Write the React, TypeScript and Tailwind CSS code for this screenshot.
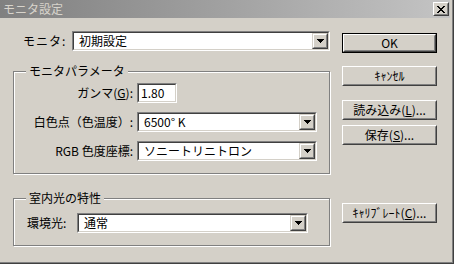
import React from "react";

function Sunken({ className = "", children }: { className?: string; children?: React.ReactNode }) {
  return (
    <div className={`border border-t-[#808080] border-l-[#808080] border-r-white border-b-white ${className}`}>
      <div className="h-full border border-t-[#404040] border-l-[#404040] border-r-[#d4d0c8] border-b-[#d4d0c8] bg-white flex items-center">
        {children}
      </div>
    </div>
  );
}

function DropBtn() {
  return (
    <div className="w-[16px] h-full border border-t-[#d4d0c8] border-l-[#d4d0c8] border-r-[#404040] border-b-[#404040]">
      <div className="w-full h-full border border-t-white border-l-white border-r-[#808080] border-b-[#808080] bg-[#d4d0c8] flex items-center justify-center">
        <svg width="7" height="4" viewBox="0 0 7 4" shapeRendering="crispEdges">
          <path d="M0 0h7v1H0zM1 1h5v1H1zM2 2h3v1H2zM3 3h1v1H3z" fill="#000" />
        </svg>
      </div>
    </div>
  );
}

function Combo({ className = "", text }: { className?: string; text: string }) {
  return (
    <Sunken className={className}>
      <span className="flex-1 pl-[5px] whitespace-nowrap">{text}</span>
      <DropBtn />
    </Sunken>
  );
}

function Btn({ children, def = false }: { children: React.ReactNode; def?: boolean }) {
  const inner = (
    <div className="h-full border border-t-white border-l-white border-r-[#404040] border-b-[#404040]">
      <div className="h-full border border-t-[#d4d0c8] border-l-[#d4d0c8] border-r-[#808080] border-b-[#808080] flex items-center justify-center whitespace-nowrap">
        {children}
      </div>
    </div>
  );
  return def ? <div className="h-[20px] border border-black">{inner}</div> : <div className="h-[20px]">{inner}</div>;
}

function Group({ title, className = "", children }: { title: string; className?: string; children: React.ReactNode }) {
  return (
    <div className={`relative border border-[#808080] shadow-[inset_1px_1px_0_#ffffff,1px_1px_0_#ffffff] ${className}`}>
      <span className="absolute top-[-8px] left-[12px] px-[3px] bg-[#d4d0c8] leading-[14px]">{title}</span>
      {children}
    </div>
  );
}

export default function App() {
  return (
    <div className="w-[454px] h-[264px] bg-[#d4d0c8] overflow-hidden font-['Noto_Sans_CJK_JP','Noto_Sans',sans-serif] text-[12px] leading-[14px] text-black">
      <div className="h-full border-r border-b border-r-[#404040] border-b-[#404040]">
        <div className="h-full flex flex-col border-r border-b border-r-[#808080] border-b-[#808080]">
          {/* Title bar */}
          <div className="h-[18px] mr-[2px] bg-linear-to-r from-[#808080] to-[#c4c4c4] flex items-center justify-between">
            <span className="pl-[3px] text-[#d8d4cc]">モニタ設定</span>
            <div className="w-[16px] h-[14px] mr-[1px] border border-t-white border-l-white border-r-[#404040] border-b-[#404040]">
              <div className="w-full h-full border border-t-[#d4d0c8] border-l-[#d4d0c8] border-r-[#808080] border-b-[#808080] bg-[#d4d0c8] flex items-center justify-center">
                <svg width="8" height="7" viewBox="0 0 8 7" shapeRendering="crispEdges">
                  <path
                    d="M0 0h2v1H0zM6 0h2v1H6zM1 1h2v1H1zM5 1h2v1H5zM2 2h4v1H2zM3 3h2v1H3zM2 4h4v1H2zM1 5h2v1H1zM5 5h2v1H5zM0 6h2v1H0zM6 6h2v1H6z"
                    fill="#000"
                  />
                </svg>
              </div>
            </div>
          </div>

          {/* Body */}
          <div className="flex flex-1">
            {/* Left column */}
            <div className="ml-[13px] w-[317px] flex flex-col">
              <div className="mt-[13px] h-[20px] flex items-center">
                <span className="w-[59px] pl-[10px] tracking-[1px]">モニタ:</span>
                <Combo className="flex-1 h-full" text="初期設定" />
              </div>

              <Group title="モニタパラメータ" className="mt-[20px] h-[103px] pt-[11px] flex flex-col gap-[9px]">
                <div className="h-[20px] flex items-center">
                  <span className="w-[119px] text-right">
                    ガンマ(<span className="underline">G</span>):
                  </span>
                  <Sunken className="ml-[4px] w-[40px] h-full">
                    <span className="pl-[2px]">1.80</span>
                  </Sunken>
                </div>
                <div className="h-[20px] flex items-center">
                  <span className="w-[119px] text-right whitespace-nowrap">白色点（色温度）:</span>
                  <Combo className="ml-[4px] w-[180px] h-full" text="6500° K" />
                </div>
                <div className="h-[20px] flex items-center">
                  <span className="w-[119px] text-right whitespace-nowrap">RGB 色度座標:</span>
                  <Combo className="ml-[4px] w-[180px] h-full" text="ソニートリニトロン" />
                </div>
              </Group>

              <Group title="室内光の特性" className="mt-[24px] h-[48px] pt-[14px]">
                <div className="h-[20px] flex items-center">
                  <span className="w-[63px] pl-[13px]">環境光:</span>
                  <Combo className="w-[231px] h-full" text="通常" />
                </div>
              </Group>
            </div>

            {/* Right column */}
            <div className="ml-[12px] w-[95px] flex flex-col">
              <div className="mt-[15px]">
                <Btn def>OK</Btn>
              </div>
              <div className="mt-[13px]">
                <Btn>ｷｬﾝｾﾙ</Btn>
              </div>
              <div className="mt-[14px]">
                <Btn>
                  読み込み(<span className="underline">L</span>)...
                </Btn>
              </div>
              <div className="mt-[5px]">
                <Btn>
                  保存(<span className="underline">S</span>)...
                </Btn>
              </div>
              <div className="mt-[58px]">
                <Btn>
                  ｷｬﾘﾌﾞﾚｰﾄ(<span className="underline">C</span>)...
                </Btn>
              </div>
            </div>
          </div>
        </div>
      </div>
    </div>
  );
}
